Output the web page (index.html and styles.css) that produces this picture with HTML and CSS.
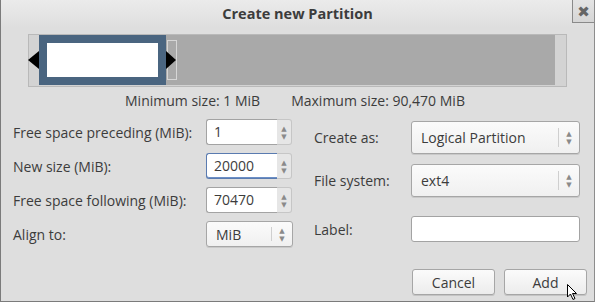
FILE: index.html
```html
<html lang="en">
<head>
    <meta charset="UTF-8">
    <title>Create new Partition</title>
    <link rel="stylesheet" href="styles.css">
</head>
<body>
    <div class="window">
        <div class="titlebar">
            <span class="title">Create new Partition</span>
            <span class="close">&#10006;</span>
        </div>
        <div class="content">
            <svg class="bar" width="539" height="53" viewBox="0 0 539 53">
                <rect x="0.5" y="0.5" width="538" height="52" fill="#d3d3d3" stroke="#b9b9b9"/>
                <rect x="138" y="1" width="389" height="50" fill="#a9a9a9"/>
                <rect x="11" y="1" width="127" height="50" fill="#4a6580"/>
                <rect x="19" y="9" width="111" height="34" fill="#ffffff"/>
                <rect x="139.5" y="6.5" width="9" height="39" fill="none" stroke="#d6d6d6"/>
                <polygon points="0,26 11,17 11,35" fill="#000"/>
                <polygon points="148,26 138,17 138,35" fill="#000"/>
            </svg>
            <div class="sizes">
                <span>Minimum size: 1 MiB</span>
                <span>Maximum size: 90,470 MiB</span>
            </div>
            <div class="form">
                <div class="left">
                    <label>Free space preceding (MiB):</label>
                    <div class="spin"><span class="entry">1</span><span class="arrows"><i>&#9650;</i><i>&#9660;</i></span></div>
                    <label>New size (MiB):</label>
                    <div class="spin focus"><span class="entry">20000</span><span class="arrows"><i>&#9650;</i><i>&#9660;</i></span></div>
                    <label>Free space following (MiB):</label>
                    <div class="spin"><span class="entry">70470</span><span class="arrows"><i>&#9650;</i><i>&#9660;</i></span></div>
                    <label>Align to:</label>
                    <div class="combo small"><span class="value">MiB</span><span class="sep"></span><span class="arrows"><i>&#9650;</i><i>&#9660;</i></span></div>
                </div>
                <div class="right">
                    <label>Create as:</label>
                    <div class="combo"><span class="value">Logical Partition</span><span class="sep"></span><span class="arrows"><i>&#9650;</i><i>&#9660;</i></span></div>
                    <label>File system:</label>
                    <div class="combo"><span class="value">ext4</span><span class="sep"></span><span class="arrows"><i>&#9650;</i><i>&#9660;</i></span></div>
                    <label class="last">Label:</label>
                    <div class="text-entry last"></div>
                </div>
            </div>
            <div class="buttons">
                <button>Cancel</button>
                <button>Add</button>
            </div>
        </div>
        <svg class="cursor" width="12" height="18" viewBox="0 0 12 18">
            <polygon points="0.5,0.5 0.5,13 3.5,10 6,15.5 8,14.5 5.5,9.5 9.5,9.5" fill="#fff" stroke="#000"/>
        </svg>
    </div>
</body>
</html>
```

FILE: styles.css
```css
body {
    margin: 0;
    font-family: "Open Sans", "DejaVu Sans", sans-serif;
    font-size: 14px;
    color: #3c3c3c;
}
.window {
    position: relative;
    width: 593px;
    height: 301px;
    background-color: #dedede;
    border-left: 1px solid #7b7b7b;
    border-right: 1px solid #8d8d8d;
    border-bottom: 1px solid #7b7b7b;
    overflow: hidden;
}
.titlebar {
    height: 28px;
    display: flex;
    align-items: flex-start;
    justify-content: center;
    position: relative;
    background: linear-gradient(#ebebeb, #dedede);
}
.title {
    font-weight: bold;
    font-size: 14.5px;
    margin-top: 4px;
    margin-left: 0;
}
.close {
    position: absolute;
    right: -1px;
    top: 0;
    width: 21px;
    height: 22px;
    border: 1px solid #8a8a8a;
    border-top: none;
    background: linear-gradient(#e4e4e4, #d6d6d6);
    color: #666;
    font-size: 15px;
    font-weight: bold;
    display: flex;
    align-items: center;
    justify-content: center;
}
.content {
    padding: 6px 0 0 27px;
}
.bar {
    display: block;
}
.sizes {
    display: flex;
    gap: 31px;
    margin: 5px 0 0 97px;
    height: 18px;
    line-height: 18px;
}
.form {
    display: flex;
    margin-top: 9px;
    margin-left: -15px;
}
.left {
    display: grid;
    grid-template-columns: 193px 87px;
    grid-auto-rows: 26px;
    row-gap: 8px;
    align-items: center;
}
.right {
    display: grid;
    grid-template-columns: 97px 169px;
    grid-template-rows: 35px 35px 26px;
    row-gap: 8px;
    margin-top: 1px;
    margin-left: 21px;
    align-items: center;
}
.right label:first-child {
    margin-top: -1px;
}
.right .last {
    margin-top: 20px;
}
.spin {
    display: flex;
    height: 26px;
}
.entry {
    width: 63px;
    height: 24px;
    line-height: 24px;
    padding-left: 7px;
    background: #fff;
    border: 1px solid #a3a3a3;
    border-right: none;
    border-radius: 3px 0 0 3px;
}
.spin.focus .entry {
    border-color: #5a7bb0;
    box-shadow: inset 0 -1px 0 #6c8fc6;
}
.spin .arrows {
    width: 14px;
    height: 24px;
    border: 1px solid #c6c6c6;
    border-left: none;
    border-radius: 0 3px 3px 0;
    background: #e6e6e6;
}
.arrows {
    display: flex;
    flex-direction: column;
    justify-content: center;
    align-items: center;
    gap: 1px;
}
.arrows i {
    font-style: normal;
    font-size: 7px;
    line-height: 7px;
    color: #8a8a8a;
}
.combo {
    display: flex;
    align-items: center;
    height: 33px;
    box-sizing: border-box;
    border: 1px solid #a6a6a6;
    border-radius: 3px;
    background: linear-gradient(#fbfbfb, #f0f0f0);
    box-shadow: 0 1px 0 #c9c9c9;
}
.combo.small {
    height: 26px;
}
.value {
    flex: 1;
    padding-left: 9px;
}
.combo .sep {
    width: 1px;
    height: 60%;
    background: #cfcfcf;
}
.combo .arrows {
    width: 20px;
}
.text-entry {
    height: 26px;
    box-sizing: border-box;
    background: #fff;
    border: 1px solid #a3a3a3;
    border-radius: 3px;
}
.buttons {
    display: flex;
    gap: 9px;
    margin: 22px 0 0 384px;
}
button {
    width: 83px;
    height: 26px;
    font-family: inherit;
    font-size: 14px;
    color: #3c3c3c;
    border: 1px solid #a6a6a6;
    border-radius: 3px;
    background: linear-gradient(#fbfbfb, #ececec);
    box-shadow: 0 1px 0 #c4c4c4;
}
.cursor {
    position: absolute;
    left: 566px;
    top: 284px;
}
```
